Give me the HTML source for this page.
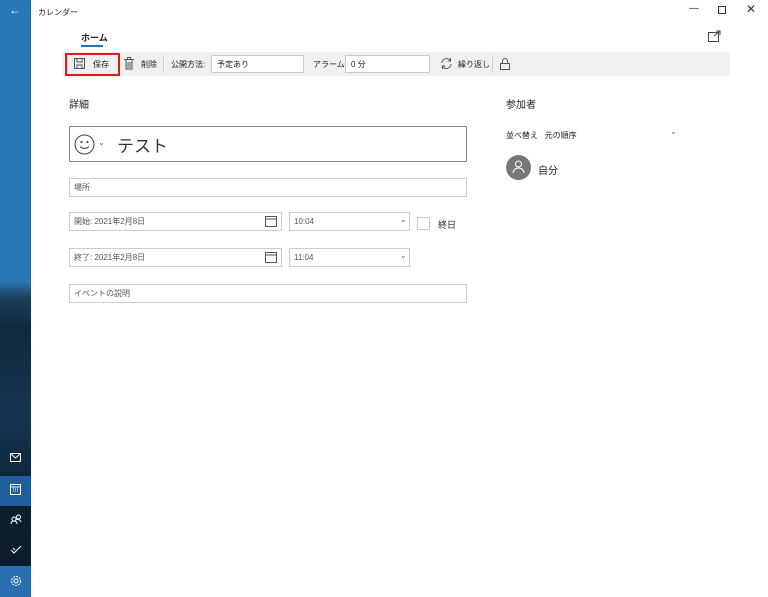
<!DOCTYPE html>
<html><head><meta charset="utf-8"><style>
*{margin:0;padding:0;box-sizing:border-box}
body{width:768px;height:597px;background:#fff;font-family:"Liberation Sans","Noto Sans CJK JP",sans-serif;color:#222;position:relative;overflow:hidden;font-size:8px}
.side{position:absolute;left:0;top:0;width:31px;height:597px;background:linear-gradient(#2877b8 0%,#2877b8 47%,#1a3d58 50%,#102a3c 55%,#143452 70%,#0f2a40 78%,#0b1e2e 85%,#0b1c2a 100%)}
.side .hl{position:absolute;left:0;width:31px;height:30px;background:#1f5f9e}
.ab{position:absolute}
.field{position:absolute;border:1px solid #ccc;height:19px;padding-left:4px;display:flex;align-items:center;color:#555;font-size:8px}
.tb{position:absolute;left:62px;top:52px;width:668px;height:24px;background:#f0f0f0}
.tb .t{position:absolute;top:0;height:24px;display:flex;align-items:center}
.tb .box{position:absolute;top:3px;height:18px;background:#fff;border:1px solid #ccc;display:flex;align-items:center;padding-left:5px}
.sep{position:absolute;top:3px;width:1px;height:18px;background:#d0d0d0}
</style></head><body>
<div class="side">
<div class="hl" style="top:476px"></div>
<div class="hl" style="top:566px;height:31px;background:#2a6fb2"></div>
<div class="ab" style="left:9px;top:3px;color:#fff;font-size:12px">←</div>
<svg class="ab" style="left:10px;top:453px" width="11" height="9"><rect x=".5" y=".5" width="10" height="8" fill="none" stroke="#fff"/><path d="M1 1l4.5 4 4.5-4" fill="none" stroke="#fff"/></svg>
<svg class="ab" style="left:10px;top:484px" width="11" height="11"><rect x=".5" y=".5" width="10" height="10" fill="none" stroke="#fff"/><path d="M1 3h9M3 5h1M5 5h1M7 5h1M3 7h1M5 7h1M7 7h1" stroke="#fff"/></svg>
<svg class="ab" style="left:10px;top:514px" width="12" height="11" fill="none" stroke="#fff"><circle cx="4" cy="5" r="2"/><circle cx="8.5" cy="3" r="2"/><path d="M1 10c0-2 1-3 3-3s3 1 3 3M6 6c1-1 4-1 5 2"/></svg>
<svg class="ab" style="left:10px;top:545px" width="12" height="9" fill="none" stroke="#fff"><path d="M1 5l3 3 7-7M3 3l2 2"/></svg>
<svg class="ab" style="left:10px;top:575px" width="12" height="12" fill="none" stroke="#fff"><circle cx="6" cy="6" r="4.5" stroke-dasharray="2 1"/><circle cx="6" cy="6" r="2"/></svg>
</div>
<div class="ab" style="left:38px;top:7px;font-size:8px">カレンダー</div>
<div class="ab" style="left:689px;top:3px;font-size:10px;color:#333">—</div>
<div class="ab" style="left:718px;top:6px;width:8px;height:8px;border:1px solid #333"></div>
<div class="ab" style="left:746px;top:2px;font-size:12px;color:#333">✕</div>
<svg class="ab" style="left:708px;top:30px" width="13" height="12" fill="none" stroke="#444"><rect x=".5" y="2.5" width="10" height="9"/><path d="M6 6l6-5M8 1h4v4"/></svg>
<div class="ab" style="left:81px;top:31px;font-size:9px;font-weight:bold">ホーム</div>
<div class="ab" style="left:81px;top:45px;width:22px;height:2px;background:#1f6fc5"></div>
<div class="tb">
<div class="ab" style="left:3px;top:1px;width:55px;height:23px;border:2px solid #e01a1a"></div>
<svg class="ab" style="left:12px;top:6px" width="11" height="11" fill="none" stroke="#555"><rect x=".5" y=".5" width="10" height="10"/><path d="M3 1v3h5V1M3 10V7h5v3"/></svg>
<div class="t" style="left:31px">保存</div>
<svg class="ab" style="left:62px;top:5px" width="10" height="13" fill="none" stroke="#555"><path d="M0 2.5h10M2 3v9h6V3M4 5v6M6 5v6M3.5 2V.5h3V2"/></svg>
<div class="t" style="left:79px">削除</div>
<div class="sep" style="left:101px"></div>
<div class="t" style="left:109px">公開方法:</div>
<div class="box" style="left:149px;width:93px">予定あり</div>
<div class="t" style="left:251px">アラーム:</div>
<div class="box" style="left:283px;width:85px">0 分</div>
<svg class="ab" style="left:378px;top:5px" width="13" height="13" fill="none" stroke="#555"><path d="M2 6a4.5 4.5 0 0 1 8.5-2M11 7a4.5 4.5 0 0 1-8.5 2M10.5 1v3h-3M2.5 12V9h3"/></svg>
<div class="t" style="left:396px">繰り返し</div>
<div class="sep" style="left:430px"></div>
<svg class="ab" style="left:438px;top:5px" width="10" height="13" fill="none" stroke="#555"><rect x=".5" y="6.5" width="9" height="6"/><path d="M2.5 6.5V4a2.5 2.5 0 0 1 5 0v2.5"/></svg>
</div>
<div class="ab" style="left:69px;top:96px;font-size:10px">詳細</div>
<div class="ab" style="left:69px;top:126px;width:398px;height:36px;border:1px solid #888"></div>
<svg class="ab" style="left:74px;top:134px" width="21" height="21" fill="none" stroke="#444"><circle cx="10.5" cy="10.5" r="9.5"/><circle cx="7.5" cy="8" r=".6" fill="#444"/><circle cx="13.5" cy="8" r=".6" fill="#444"/><path d="M6 12.5q4.5 4 9 0"/></svg>
<div class="ab" style="left:98px;top:138px;font-size:8px;color:#666">⌄</div>
<div class="ab" style="left:117px;top:132px;font-size:17px;color:#333">テスト</div>
<div class="field" style="left:69px;top:178px;width:398px">場所</div>
<div class="field" style="left:69px;top:212px;width:213px">開始: 2021年2月8日</div>
<div class="field" style="left:69px;top:248px;width:213px">終了: 2021年2月8日</div>
<svg class="ab" style="left:265px;top:216px" width="12" height="11" fill="none" stroke="#555"><rect x=".5" y=".5" width="11" height="10"/><path d="M1 3h10"/></svg>
<svg class="ab" style="left:265px;top:252px" width="12" height="11" fill="none" stroke="#555"><rect x=".5" y=".5" width="11" height="10"/><path d="M1 3h10"/></svg>
<div class="field" style="left:289px;top:212px;width:121px">10:04</div>
<div class="field" style="left:289px;top:248px;width:121px">11:04</div>
<div class="ab" style="left:400px;top:215px;font-size:8px;color:#666">⌄</div>
<div class="ab" style="left:400px;top:251px;font-size:8px;color:#666">⌄</div>
<div class="ab" style="left:417px;top:217px;width:13px;height:13px;border:1px solid #ccc"></div>
<div class="ab" style="left:438px;top:218px;font-size:9px">終日</div>
<div class="field" style="left:69px;top:284px;width:398px">イベントの説明</div>
<div class="ab" style="left:506px;top:96px;font-size:10px">参加者</div>
<div class="ab" style="left:506px;top:130px">並べ替え&nbsp;&nbsp;&nbsp;元の順序</div>
<div class="ab" style="left:670px;top:127px;font-size:8px;color:#666">⌄</div>
<div class="ab" style="left:506px;top:155px;width:25px;height:25px;border-radius:50%;background:#777"></div>
<svg class="ab" style="left:512px;top:160px" width="13" height="14" fill="none" stroke="#fff"><circle cx="6.5" cy="4" r="3"/><path d="M1 13c0-3 2.5-5 5.5-5s5.5 2 5.5 5"/></svg>
<div class="ab" style="left:538px;top:162px;font-size:10px">自分</div>
</body></html>
